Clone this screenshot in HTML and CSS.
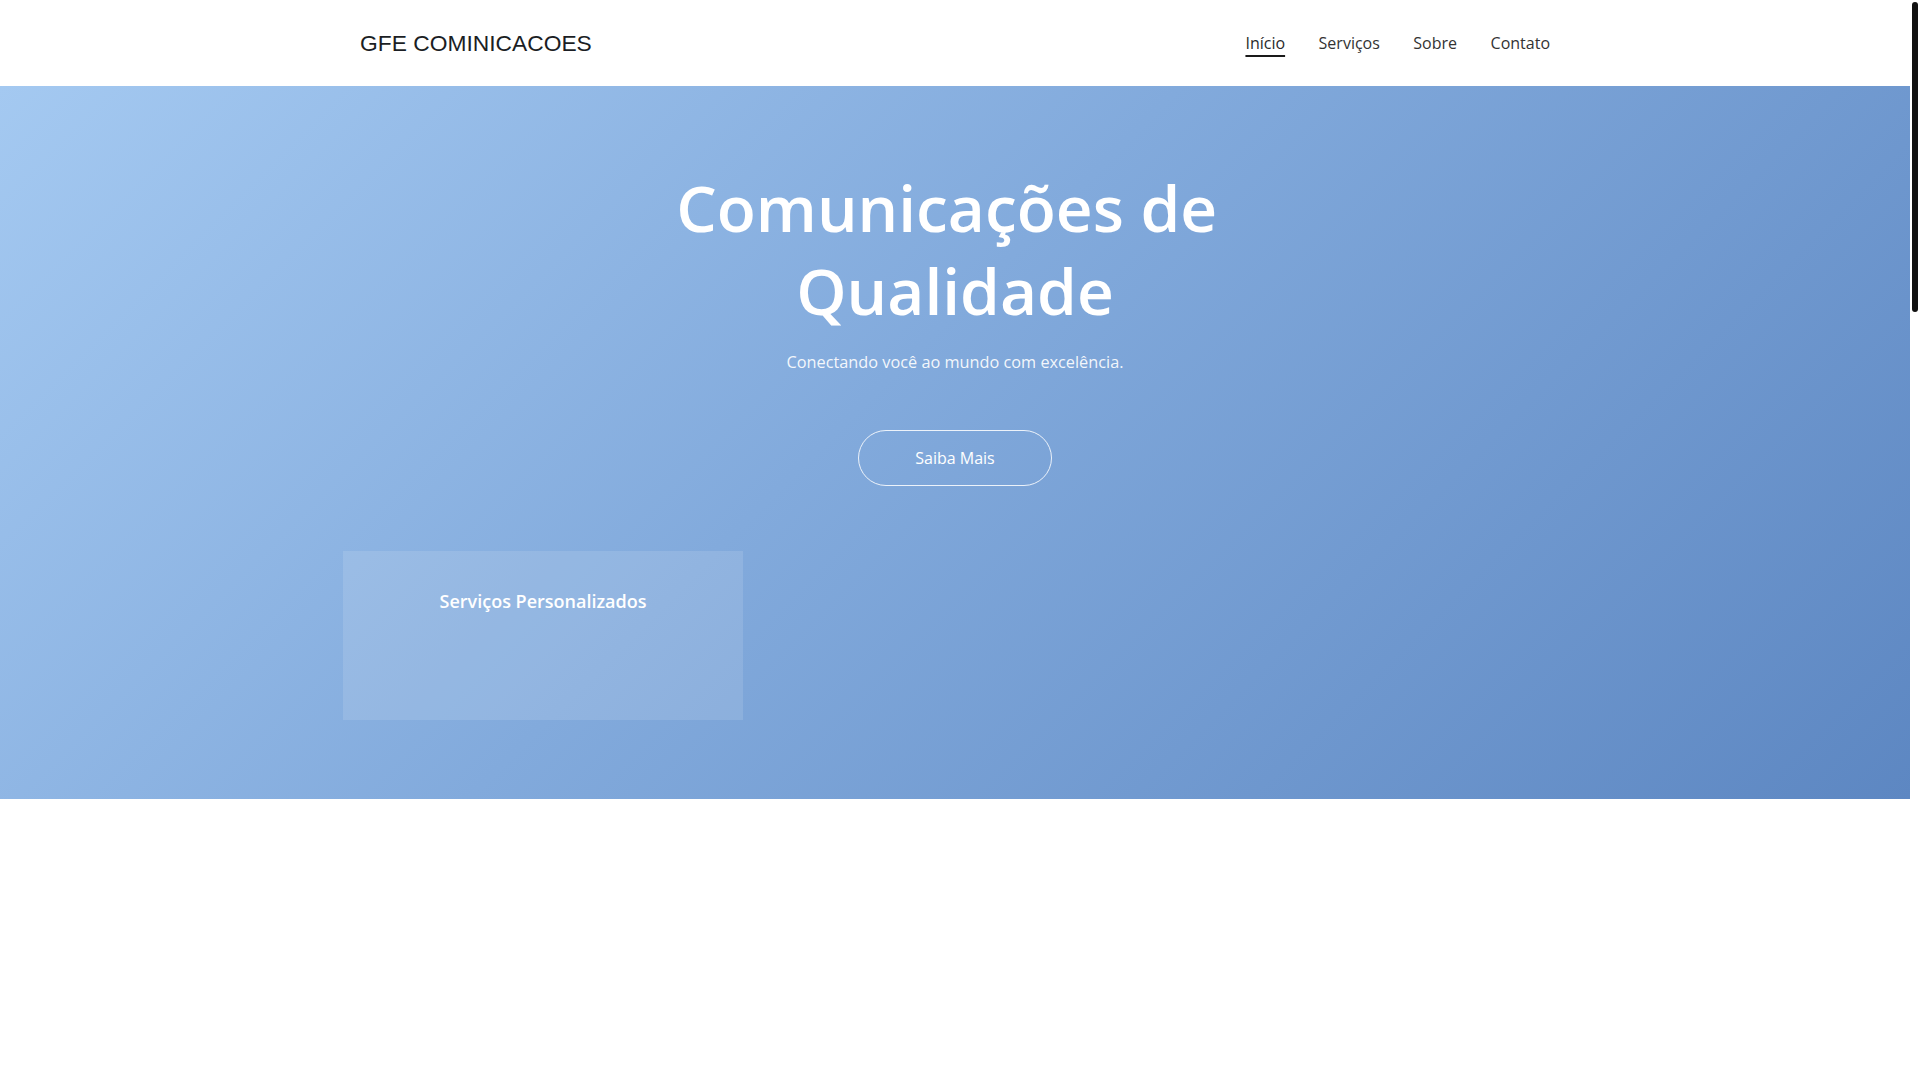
FILE: index.html
```html
<!DOCTYPE html>
<html lang="pt-BR">
<head>
<meta charset="utf-8">
<title>GFE COMINICACOES</title>
<link rel="stylesheet" href="styles.css">
</head>
<body>
<header class="site-header">
  <div class="container header-inner">
    <div class="logo">GFE COMINICACOES</div>
    <nav class="nav">
      <a class="nav-link active" href="#inicio">Início</a>
      <a class="nav-link" href="#servicos">Serviços</a>
      <a class="nav-link" href="#sobre">Sobre</a>
      <a class="nav-link" href="#contato">Contato</a>
    </nav>
  </div>
</header>
<section class="hero" id="inicio">
  <h1 class="hero-title">Comunicações de&nbsp;<br>Qualidade</h1>
  <p class="hero-sub">Conectando você ao mundo com excelência.</p>
  <div class="hero-actions">
    <a class="btn-outline" href="#servicos">Saiba Mais</a>
  </div>
  <div class="cards">
    <div class="card">
      <h3 class="card-title">Serviços Personalizados</h3>
    </div>
  </div>
</section>
<section class="section" id="servicos"></section>
<section class="section" id="sobre"></section>
<section class="section" id="contato"></section>
<div class="scrollbar" aria-hidden="true"><div class="scrollbar-thumb"></div></div>
</body>
</html>
```
FILE: styles.css
```css
body {
  margin: 0;
  padding-right: 10px;
  font-family: "Open Sans", "Noto Sans", sans-serif;
  background: #ffffff;
  color: #333333;
}

.container {
  width: 1190px;
  margin: 0 auto;
}

.site-header {
  height: 86px;
  background: #ffffff;
}

.header-inner {
  height: 100%;
  display: flex;
  align-items: center;
  justify-content: space-between;
}

.logo {
  font-family: "Liberation Sans", Arial, sans-serif;
  font-size: 22.8px;
  color: #1b1e24;
}

.nav {
  display: flex;
  gap: 33.5px;
}

.nav-link {
  font-size: 16px;
  color: #333333;
  text-decoration: none;
}

.nav-link.active {
  color: #2a2a2a;
  text-decoration: underline;
  text-decoration-thickness: 2px;
  text-underline-offset: 6px;
  text-decoration-color: #1a1a1a;
}

.hero {
  background: linear-gradient(135deg, #a4c9f1 0%, #82aadc 45%, #5d87c2 100%);
  padding: 80px 0 79px;
  text-align: center;
  color: #ffffff;
}

.hero-title {
  max-width: 700px;
  margin: 0 auto 18px;
  font-size: 64px;
  line-height: 1.3;
  font-weight: 600;
}

.hero-sub {
  margin: 0 0 54px;
  font-size: 16.3px;
  line-height: 25.6px;
  color: rgba(255, 255, 255, 0.92);
}

.hero-actions {
  display: flex;
  justify-content: center;
}

.btn-outline {
  display: inline-block;
  padding: 16px 56px;
  border: 1px solid rgba(255, 255, 255, 0.85);
  border-radius: 30px;
  color: #ffffff;
  font-size: 16px;
  text-decoration: none;
}

.cards {
  width: 1224px;
  margin: 65px auto 0;
  display: grid;
  grid-template-columns: repeat(3, 400px);
  gap: 12px;
}

.card {
  box-sizing: border-box;
  min-height: 169px;
  padding: 38px 32px 32px;
  background: rgba(255, 255, 255, 0.12);
}

.card-title {
  margin: 0;
  font-size: 18px;
  font-weight: 600;
  color: #ffffff;
}

.section {
  height: 990px;
  background: #ffffff;
}

.scrollbar {
  position: fixed;
  top: 0;
  right: 0;
  width: 10px;
  height: 100vh;
  background: #ffffff;
}

.scrollbar-thumb {
  margin: 2px 0 0 2px;
  width: 6px;
  height: 310px;
  border-radius: 3px;
  background: #111111;
}
```
